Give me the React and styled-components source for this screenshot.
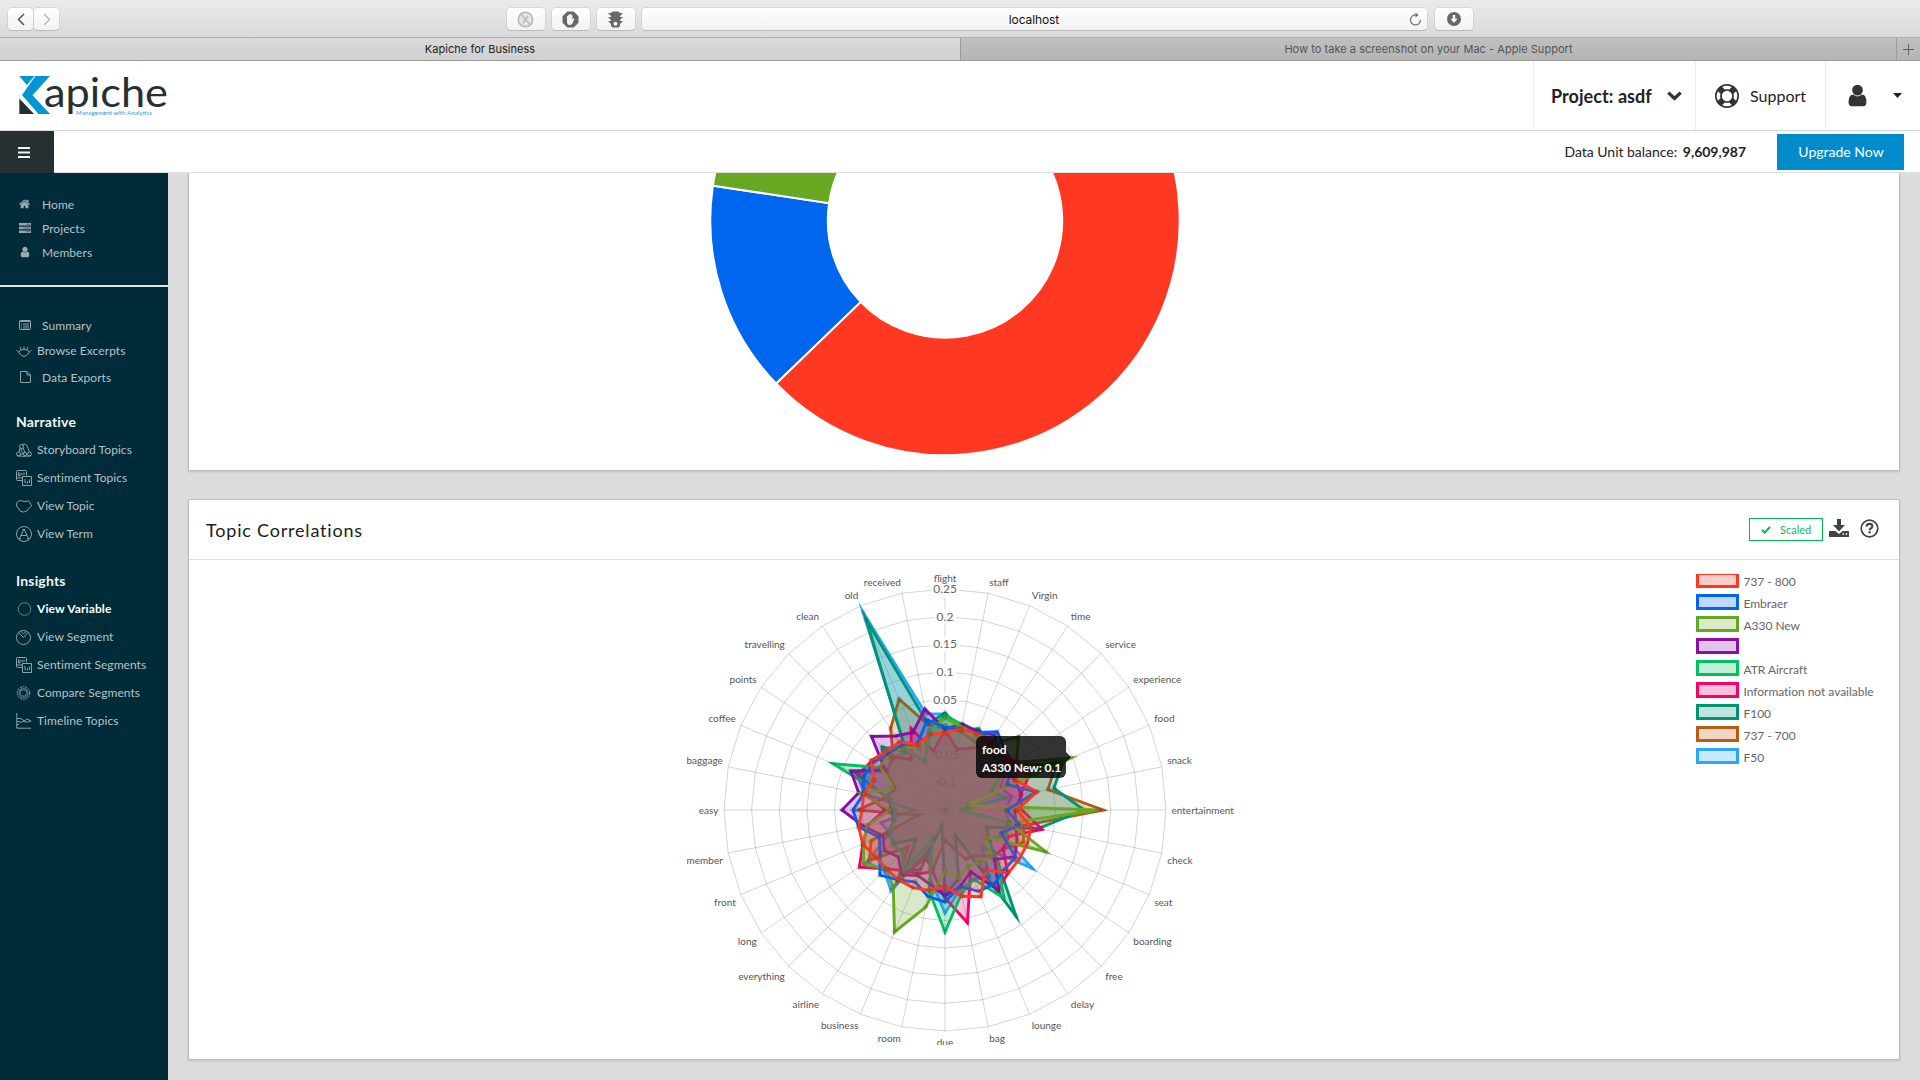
import React from 'react';
import styled, { createGlobalStyle, css } from 'styled-components';

const GlobalStyle = createGlobalStyle`
  *, *::before, *::after { box-sizing: border-box; }
  html, body { margin: 0; padding: 0; }
  body {
    width: 1920px;
    height: 1080px;
    overflow: hidden;
    background: #dcdcdc;
    font-family: Lato, "Open Sans", sans-serif;
    color: #222;
  }
`;

/* ---------- Browser chrome ---------- */

const Page = styled.div`
  display: flex;
  flex-direction: column;
  height: 1080px;
`;

const BrowserBar = styled.div`
  display: flex;
  align-items: flex-start;
  height: 38px;
  flex: none;
  padding: 8px 0 0 8px;
  background: linear-gradient(#ebebeb, #dadada);
  border-bottom: 1px solid #b0b0b0;
  font-family: Inter, Roboto, sans-serif;
`;

const BarButton = styled.div`
  display: flex;
  align-items: center;
  justify-content: center;
  width: ${(p) => p.$w || 38}px;
  height: 22px;
  margin-left: ${(p) => p.$gap || 0}px;
  border-radius: 4px;
  background: linear-gradient(#ffffff, #f2f2f2);
  box-shadow: 0 0 0 0.5px #c4c4c4, 0 1px 0 #b2b2b2;
`;

const AddressBar = styled(BarButton)`
  justify-content: flex-start;
  width: 785px;
  padding-right: 5px;
  color: #111;
  font-size: 12px;
`;

const Address = styled.span`
  flex: 1;
  padding-left: 18px;
  text-align: center;
  letter-spacing: -0.1px;
`;

const TabStrip = styled.div`
  display: flex;
  height: 23px;
  flex: none;
  border-bottom: 1px solid #989898;
  font-family: Inter, Roboto, sans-serif;
  font-size: 11px;
`;

const Tab = styled.div`
  display: flex;
  align-items: center;
  justify-content: center;
  width: ${(p) => p.$w}px;
  letter-spacing: ${(p) => p.$ls || 0}px;
  color: ${(p) => (p.$active ? '#222' : '#545454')};
  background: ${(p) =>
    p.$active ? 'linear-gradient(#dadada, #d1d1d1)' : 'linear-gradient(#c0c0c0, #b5b5b5)'};
  border-left: ${(p) => (p.$active ? 'none' : '1px solid #9a9a9a')};
`;

/* ---------- App header ---------- */

const Header = styled.header`
  display: flex;
  justify-content: space-between;
  height: 70px;
  flex: none;
  padding-left: 18px;
  background: #fff;
  border-bottom: 1px solid #d6d6d6;
`;

const Logo = styled.div`
  padding-top: 3px;
`;

const HeaderNav = styled.nav`
  display: flex;
`;

const HeaderCell = styled.div`
  display: flex;
  align-items: center;
  width: ${(p) => p.$w}px;
  padding: 0 0 0 ${(p) => p.$pad}px;
  gap: ${(p) => p.$gap}px;
  border-left: 1px solid #ececec;
  font-size: ${(p) => p.$size || 16}px;
  font-weight: ${(p) => (p.$bold ? 700 : 400)};
  letter-spacing: ${(p) => p.$ls || 0}px;
  white-space: nowrap;
`;

const SubHeader = styled.div`
  display: flex;
  align-items: center;
  height: 42px;
  flex: none;
  background: linear-gradient(#f6f6f6, #fff 3px);
  border-bottom: 1px solid #e2e2e2;
`;

const MenuToggle = styled.div`
  display: flex;
  align-items: center;
  width: 54px;
  height: 42px;
  margin-bottom: -1px;
  padding-left: 18px;
  background: #263033;
`;

const Balance = styled.div`
  margin-left: auto;
  font-size: 14px;
  letter-spacing: -0.02px;
  b { margin-left: 2px; }
`;

const Upgrade = styled.button`
  width: 127px;
  height: 36px;
  margin: 0 16px 0 31px;
  padding: 0 0 0 1px;
  border: 0;
  background: #008ccb;
  color: #fff;
  font: 400 14px Lato, sans-serif;
`;

/* ---------- Sidebar ---------- */

const Body = styled.div`
  display: flex;
  flex: 1;
  min-height: 0;
`;

const Sidebar = styled.aside`
  width: 168px;
  flex: none;
  padding-top: 19px;
  background: #002b38;
`;

const NavItem = styled.div`
  display: flex;
  align-items: center;
  height: ${(p) => p.$h || 28}px;
  padding-left: 16px;
  font-size: 12px;
  letter-spacing: ${(p) => (p.$active ? 0.12 : 0.06)}px;
  color: ${(p) => (p.$active ? '#fff' : '#b8c3c7')};
  font-weight: ${(p) => (p.$active ? 700 : 400)};
  svg { opacity: 0.85; }
`;

const NavIcon = styled.span`
  display: flex;
  justify-content: ${(p) => (p.$wide ? 'center' : 'flex-start')};
  width: ${(p) => (p.$wide ? 18 : 16)}px;
  margin-right: ${(p) => (p.$wide ? 8 : 5)}px;
  padding-top: ${(p) => (p.$wide ? 0 : 2)}px;
`;

const NavRule = styled.div`
  height: 2px;
  margin: 21px 0 26px;
  background: #dfe4e5;
`;

const NavHeading = styled.div`
  height: 26px;
  line-height: 26px;
  margin-top: ${(p) => p.$top}px;
  padding-left: 16px;
  color: #f2f5f5;
  font-size: 14px;
  font-weight: 700;
  letter-spacing: 0.18px;
`;

/* ---------- Panels ---------- */

const Main = styled.main`
  flex: 1;
  display: flex;
  flex-direction: column;
  gap: 28px;
  padding: 0 20px 0 20px;
  background: #dcdcdc;
`;

const Panel = styled.section`
  background: #fff;
  border: 1px solid #bdbdbd;
  box-shadow: 0 1px 2px rgba(0, 0, 0, 0.12);
`;

const DonutPanel = styled(Panel)`
  height: 298px;
  border-top: 0;
  svg { display: block; }
`;

const RadarPanel = styled(Panel)`
  height: 561px;
`;

const PanelHeader = styled.div`
  display: flex;
  align-items: center;
  height: 60px;
  padding: 0 20px 0 17px;
  border-bottom: 1px solid #dedede;
`;

const PanelTitle = styled.h2`
  flex: 1;
  margin: 0;
  font: 400 18px "Century Gothic", "URW Gothic", Lato, sans-serif;
  letter-spacing: 0.8px;
  color: #1c1c1c;
`;

const ScaledButton = styled.div`
  display: flex;
  align-items: center;
  width: 74px;
  height: 23px;
  margin-right: 6px;
  padding-left: 11px;
  gap: 9px;
  border: 1px solid #00b64f;
  color: #16b85a;
  font-size: 11px;
`;

const PanelTool = styled.span`
  display: flex;
  margin-left: ${(p) => p.$gap || 0}px;
  padding-bottom: 2px;
`;

const ChartArea = styled.div`
  display: flex;
  position: relative;
  padding: 14px 0 0 15px;
`;

const Legend = styled.div`
  display: flex;
  flex-direction: column;
  height: 200px;
  margin-left: 5px;
  overflow: hidden;
`;

const LegendRow = styled.div`
  display: flex;
  height: 22px;
  flex: none;
  gap: 4.500px;
  color: #666;
  font-size: 12px;
  line-height: 18px;
  letter-spacing: -0.03px;
  white-space: nowrap;
  &:first-child { margin-top: -2px; }
`;

const Swatch = styled.span`
  width: 43px;
  height: 16px;
  border: 3px solid ${(p) => p.$c};
  background: ${(p) => p.$c}40;
  background-clip: padding-box;
`;

const LegendText = styled.span`
  padding-top: 1px;
`;

const Tooltip = styled.div`
  position: absolute;
  left: 787px;
  top: 176px;
  width: 90px;
  height: 42px;
  padding: 5px 6px;
  border-radius: 6px;
  background: rgba(0, 0, 0, 0.8);
  color: #fff;
  font-size: 12px;
  font-weight: 700;
  line-height: 18px;
  letter-spacing: -0.06px;
  white-space: nowrap;
  &::after {
    content: '';
    position: absolute;
    left: 100%;
    top: 16px;
    border: 5px solid transparent;
    border-left-color: rgba(0, 0, 0, 0.8);
    border-right-width: 0;
  }
`;

const svgText = css`
  font-family: Lato, sans-serif;
  fill: #666;
`;
const AxisLabel = styled.text`${svgText} font-size: 10px; fill: #555;`;
const TickLabel = styled.text`${svgText} font-size: 12px; text-anchor: middle;`;
const LogoName = styled.text`font-family: "Century Gothic", "URW Gothic", Lato, sans-serif; font-size: 40px; fill: #263033;`;
const LogoTag = styled.text`font-family: Lato, sans-serif; font-size: 6.5px; fill: #2ba0d4;`;

/* ---------- Icons ---------- */

const FA = {
  home: 'M1408 992v480q0 26-19 45t-45 19h-384v-384h-256v384h-384q-26 0-45-19t-19-45v-480q0-1 .5-3t.5-3l575-474 575 474q1 2 1 6zm223-69l-62 74q-8 9-21 11h-3q-13 0-21-7l-692-577-692 577q-12 8-24 7-13-2-21-11l-62-74q-8-10-7-23.5t11-21.5l719-599q32-26 76-26t76 26l244 204v-195q0-14 9-23t23-9h192q14 0 23 9t9 23v408l219 182q10 8 11 21.5t-7 23.5z',
  user: 'M1536 1399q0 109-62.5 187t-150.5 78h-854q-88 0-150.5-78t-62.5-187q0-85 8.5-160.5t31.5-152 58.5-131 94-89 134.5-34.5q131 128 313 128t313-128q76 0 134.5 34.5t94 89 58.5 131 31.5 152 8.5 160.5zm-256-887q0 159-112.5 271.5t-271.5 112.5-271.5-112.5-112.5-271.5 112.5-271.5 271.5-112.5 271.5 112.5 112.5 271.5z',
  ring: 'M896 0q182 0 348 71t286 191 191 286 71 348-71 348-191 286-286 191-348 71-348-71-286-191-191-286-71-348 71-348 191-286 286-191 348-71zm0 128q-190 0-361 90l194 194q82-28 167-28t167 28l194-194q-171-90-361-90zm-678 1129l194-194q-28-82-28-167t28-167l-194-194q-90 171-90 361t90 361zm678 407q190 0 361-90l-194-194q-82 28-167 28t-167-28l-194 194q171 90 361 90zm0-384q159 0 271.5-112.5t112.5-271.5-112.5-271.5-271.5-112.5-271.5 112.5-112.5 271.5 112.5 271.5 271.5 112.5zm484-217l194 194q90-171 90-361t-90-361l-194 194q28 82 28 167t-28 167z',
};

const Glyph = ({ d, size, color = 'currentColor' }) => (
  <svg width={size} height={size} viewBox="0 0 1792 1792" fill={color}>
    <path d={d} />
  </svg>
);

const Line = ({ children, w = 16, h = 16, sw = 0.9 }) => (
  <svg width={w} height={h} viewBox={`0 0 ${w} ${h}`} fill="none" stroke="#b9c6ca" strokeWidth={sw} strokeLinejoin="round">
    {children}
  </svg>
);

const SentimentIcon = () => (
  <Line>
    <path d="M6 10.5H1.5Q.5 10.500 .5 9.500V1.500Q.5.5 1.500.5H9.500Q10.500.5 10.500 1.500V5.500M6.500 6.500H15.500V15.500H6.500Z" />
    <path d="M2.500 2.500V6M2.500 6Q4 7 4 5V2.500M6 3V5.500M8 2.500V5M13.500 9.500V13M11.500 11V13.500M9 9V12Q9 13.500 10 13M.5 8H6" />
  </Line>
);

const ICONS = {
  home: <Glyph d={FA.home} size={12} />,
  user: <Glyph d={FA.user} size={12} />,
  projects: (
    <svg width="12" height="10" viewBox="0 0 12 10" fill="#b3bfc3">
      <path d="M0 0H12V2.600H0ZM0 3.700H12V6.300H0ZM0 7.400H12V10H0Z" />
      <path d="M7.500 1.300H11M4 5H11M6.500 8.700H11" stroke="#4c6770" strokeWidth=".8" />
    </svg>
  ),
  summary: (
    <svg width="12" height="10" viewBox="0 0 12 10" fill="none" stroke="#b3bfc3">
      <rect x=".5" y=".5" width="11" height="9" rx=".8" />
      <path d="M.5 1.500H11.500M2 4H3M4 4H10M2 6H3M4 6H10M2 8H3M4 8H10" strokeWidth=".9" />
    </svg>
  ),
  browse: (
    <Line h={12}>
      <path d="M.5 5 2.500 7Q8 1.500 13.500 7L15.500 5M2.500 7Q8 16 13.500 7M8 4V1.500M4.800 4.600 4 1.800M11.200 4.600 12 1.800" />
    </Line>
  ),
  file: (
    <Line w={11} h={12}>
      <path d="M.5.5H7L10.500 4V11.500H.5ZM7 .5V4H10.500" />
    </Line>
  ),
  story: (
    <Line h={14}>
      <circle cx="5.500" cy="3.500" r="2" />
      <circle cx="2.500" cy="11" r="2" />
      <circle cx="13.500" cy="11" r="2" />
      <circle cx="9" cy="11" r="1.600" />
      <path d="M6 1.500Q10.500 0 11.500 4L13.500 9M4 5 3 9M4.500 11H7.500M10.500 11H11.500M7 5 9 9.500M5.500 5.500Q4 9 7.500 9.500M1 12.800Q8 14 15 12.800" />
    </Line>
  ),
  sentiment: <SentimentIcon />,
  topic: (
    <Line h={13}>
      <path d="M2.500 1Q5 0 7 1.200T11 1Q13 0 14 2.500T15.500 6Q14 7.500 12.500 8.500Q11.500 12 7.500 12Q3.500 12 3 9Q.5 7 .5 5Q.5 2 2.500 1Z" />
    </Line>
  ),
  term: (
    <Line>
      <circle cx="8" cy="8" r="7.500" />
      <path d="M3 13.500 8 3 13 13.500M5 9.500H11M6.500 3.500H9M3 12.800H5M11 12.800H13" />
    </Line>
  ),
  variable: (
    <Line>
      <circle cx="8.500" cy="8" r="6.300" opacity=".7" />
    </Line>
  ),
  segment: (
    <Line>
      <circle cx="7.500" cy="8.500" r="7" />
      <path d="M2.500 3.500 7.500 8.500 12 3.500M5 2.500 7.500 5 10 2.500" />
    </Line>
  ),
  compare: (
    <Line>
      <circle cx="7.500" cy="8" r="6.300" strokeDasharray="2 .8" />
      <circle cx="7.500" cy="8" r="4.600" opacity=".7" />
      <path d="M5 5H10L11 8 9.500 11H5.500L4 8Z" strokeDasharray="1.500 .6" />
    </Line>
  ),
  timeline: (
    <Line>
      <path d="M.8 0V15.200H15M.8 11.500H3M1 5.500H4Q6 5.500 8 8T15 7.500M1 8.500Q6 10.500 9 7.500T15 8.800" />
    </Line>
  ),
};

const NAV = [
  { icon: 'home', label: 'Home', h: 24, wide: true },
  { icon: 'projects', label: 'Projects', h: 24, wide: true },
  { icon: 'user', label: 'Members', h: 24, wide: true },
  { rule: true },
  { icon: 'summary', label: 'Summary', h: 24, wide: true },
  { icon: 'browse', label: 'Browse Excerpts', h: 26 },
  { icon: 'file', label: 'Data Exports', h: 28, wide: true },
  { heading: 'Narrative', top: 18 },
  { icon: 'story', label: 'Storyboard Topics' },
  { icon: 'sentiment', label: 'Sentiment Topics' },
  { icon: 'topic', label: 'View Topic' },
  { icon: 'term', label: 'View Term' },
  { heading: 'Insights', top: 21 },
  { icon: 'variable', label: 'View Variable', active: true },
  { icon: 'segment', label: 'View Segment' },
  { icon: 'sentiment', label: 'Sentiment Segments' },
  { icon: 'compare', label: 'Compare Segments' },
  { icon: 'timeline', label: 'Timeline Topics' },
];

/* ---------- Charts ---------- */

const TOPICS = ['flight', 'staff', 'Virgin', 'time', 'service', 'experience', 'food', 'snack',
  'entertainment', 'check', 'seat', 'boarding', 'free', 'delay', 'lounge', 'bag', 'due', 'room',
  'business', 'airline', 'everything', 'long', 'front', 'member', 'easy', 'baggage', 'coffee',
  'points', 'travelling', 'clean', 'old', 'received'];

/* Distance of every vertex from the chart centre, one entry per topic. */
const SERIES = [
  { name: '737 - 800', color: '#ff3822', r: [77, 82.5, 83, 82, 82, 85, 77, 94, 72, 88, 89, 89, 89.5, 72, 94, 88, 77, 82, 84, 84, 83, 84, 89, 88, 83, 83, 77, 89, 83, 82, 71, 77] },
  { name: 'Embraer', color: '#0064ee', fill: 0.14, r: [83, 82, 84, 94, 85, 82, 67, 93, 62, 76, 61, 85, 84, 89, 88, 78, 92, 88, 78, 84, 92, 78, 71, 88, 92, 83, 88, 86, 80, 78, 71.5, 92] },
  { name: 'A330 New', color: '#66a822', r: [92, 85, 80, 78, 104, 86, 136, 23, 153, 66, 109, 49, 66, 63, 61, 70, 61, 99, 132, 93, 83, 98, 88, 80, 55, 86, 56, 78, 78, 76, 66, 80] },
  { name: '', color: '#8a0fa8', r: [81, 88, 85, 90, 78, 74, 76, 78, 70, 72, 78, 84, 70, 97, 67, 78, 86, 76, 71, 78, 66, 73, 67, 83, 103, 88, 102, 72, 104, 89, 84, 103] },
  { name: 'ATR Aircraft', color: '#00bf5f', r: [95, 87, 84, 80, 78, 72, 50, 62, 17, 66, 66, 53, 75, 106, 75, 85, 122, 82, 31, 75, 60, 63, 60, 52, 50, 56, 121, 76, 87, 77, 52, 80] },
  { name: 'Information not available', color: '#f90066', r: [80, 62, 67, 75, 80, 80, 91, 77, 77, 99, 69, 70, 89, 96, 67, 115, 88, 63, 69, 73, 83, 103, 89, 79, 60, 80, 94, 88, 75, 61, 88, 60] },
  { name: 'F100', color: '#009473', r: [97, 82, 88, 80, 72, 70, 128, 111, 139, 95, 45, 53, 75, 128, 28, 70, 85, 16, 65, 72, 41, 60, 62, 52, 54, 57, 98, 75, 89, 70, 206, 88] },
  { name: '737 - 700', color: '#b85c12', r: [82, 80, 75, 70, 80, 82, 120, 105, 158, 80, 85, 70, 66, 55, 53, 38, 30, 60, 52, 87, 52, 91, 80, 27, 87, 62, 54, 70, 73, 98, 120, 87] },
  { name: 'F50', color: '#2ba6ff', r: [96, 84, 86, 85, 80, 75, 60, 68, 60, 66, 60, 105, 52, 80, 75, 80, 103, 72, 43, 97, 86, 94, 60, 65, 32, 82, 96, 70, 75, 68, 214, 98] },
];

const CX = 741;
const CY = 236;
const R = 221;
const polar = (k, r) => {
  const a = (k * 2 * Math.PI) / TOPICS.length;
  return [CX + r * Math.sin(a), CY - r * Math.cos(a)];
};
const polygon = (radii) => radii.map((r, k) => polar(k, r).map((n) => n.toFixed(1)).join(',')).join(' ');
const TICKS = ['-0.1', '-0.05', '0', '0.05', '0.1', '0.15', '0.2', '0.25'];

function Radar() {
  return (
    <svg width="1487" height="471" viewBox="0 0 1487 471">
      <g fill="none" stroke="#000" strokeOpacity=".17">
        {TICKS.map((t, i) => (
          <polygon key={t} points={polygon(TOPICS.map(() => (R / 8) * (i + 1)))} />
        ))}
        {TOPICS.map((t, k) => {
          const [x, y] = polar(k, R);
          return <line key={t} x1={CX} y1={CY} x2={x} y2={y} />;
        })}
      </g>
      {TICKS.map((t, i) => {
        const y = CY - (R / 8) * (i + 1);
        const w = t.length * 6 + 5;
        return (
          <g key={t}>
            <rect x={CX - w / 2} y={y - 8} width={w} height="16" fill="#fff" fillOpacity=".75" />
            <TickLabel x={CX} y={y + 4}>{t}</TickLabel>
          </g>
        );
      })}
      {TOPICS.map((t, k) => {
        const [x, y] = polar(k, R + 5.5);
        const n = TOPICS.length;
        const middle = k === 0 || k === n / 2;
        const side = k === n / 4 || k === (3 * n) / 4;
        const upper = k < n / 4 || k > (3 * n) / 4;
        const top = side ? y - 5 : upper ? y - 10.500 : y + 0.5;
        return (
          <AxisLabel key={t} x={x} y={top + 9} textAnchor={middle ? 'middle' : k < n / 2 ? 'start' : 'end'}>
            {t}
          </AxisLabel>
        );
      })}
      {[...SERIES].reverse().map((s) => (
        <g key={s.color}>
          <polygon points={polygon(s.r)} fill={s.color} fillOpacity={s.fill || 0.25} stroke={s.color} strokeWidth="2.900" strokeMiterlimit="10" />
          {s.r.map((r, k) => {
            const [x, y] = polar(k, r);
            return <circle key={k} cx={x} cy={y} r="3" fill="#000" fillOpacity=".1" />;
          })}
        </g>
      ))}
    </svg>
  );
}

const DX = 756;
const DY = 47.500;
const ring = (a0, a1) => {
  const p = (r, a) => `${DX + r * Math.sin(a)} ${DY - r * Math.cos(a)}`;
  const big = a1 - a0 > Math.PI ? 1 : 0;
  return `M${p(234.7, a0)}A234.700 234.700 0 ${big} 1 ${p(234.7, a1)}L${p(117.2, a1)}A117.200 117.200 0 ${big} 0 ${p(117.2, a0)}Z`;
};

function Donut() {
  const split = Math.PI + 0.8035;
  const second = Math.PI * 1.5 + 0.1487;
  return (
    <svg width="1700" height="297" viewBox="0 0 1700 297" stroke="#fff" strokeWidth="2">
      <path d={ring(0, split)} fill="#ff3822" />
      <path d={ring(split, second)} fill="#0066ee" />
      <path d={ring(second, second + 0.7)} fill="#66a822" />
    </svg>
  );
}

export default function App() {
  return (
    <Page>
      <GlobalStyle />
      <BrowserBar>
        <BarButton $w={25}>
          <svg width="8" height="13" fill="none" stroke="#555" strokeWidth="1.500"><path d="M7 1 1.500 6.500 7 12" /></svg>
        </BarButton>
        <BarButton $w={25} $gap={1}>
          <svg width="8" height="13" fill="none" stroke="#bbb" strokeWidth="1.500"><path d="M1 1 6.500 6.500 1 12" /></svg>
        </BarButton>
        <BarButton $gap={447.5}>
          <svg width="17" height="17" fill="#e4e4e4" stroke="#b9b9b9" strokeWidth="1.600">
            <circle cx="8.500" cy="8.500" r="7.200" />
            <path d="M4 3.500 13 13.500M11 5 6 12" strokeWidth="1.300" />
          </svg>
        </BarButton>
        <BarButton $gap={7}>
          <svg width="17" height="17">
            <path d="M5.300.5H11.700L16.500 5.300V11.700L11.700 16.500H5.300L.5 11.700V5.300Z" fill="#686868" />
            <path d="M5 9V5.200Q5.600 4.300 6.200 5.200V4Q6.900 3 7.600 4V3.200Q8.300 2.400 9 3.200V4Q9.800 3.200 10.400 4.200V8.500L11.600 7.300Q12.700 7 12.300 8.300L10.500 12.300Q10 14 8 14Q5 14 5 11Z" fill="#f4f4f4" />
          </svg>
        </BarButton>
        <BarButton $gap={7}>
          <svg width="17" height="17" fill="#686868">
            <path d="M5.500.5H11.500L13 2H16L13 5V6H16L13 9V10H16L13 13V15L11.500 16.500H5.500L4 15V13L1 10H4V9L1 6H4V5L1 2H4Z" />
            <circle cx="8.500" cy="12.800" r="2" fill="#f4f4f4" />
          </svg>
        </BarButton>
        <AddressBar $gap={7}>
          <Address>localhost</Address>
          <svg width="13" height="14" fill="none" stroke="#6d6d6d" strokeWidth="1.200">
            <path d="M7 3A5 5 0 1 0 11.500 8" />
            <path d="M6.500.5 9.500 3 6.500 5.500Z" fill="#6d6d6d" stroke="none" />
          </svg>
        </AddressBar>
        <BarButton $gap={8}>
          <svg width="14" height="14">
            <circle cx="7" cy="7" r="7" fill="#686868" />
            <path d="M5.800 3H8.200V6.800H10.500L7 11 3.500 6.800H5.800Z" fill="#fff" />
          </svg>
        </BarButton>
      </BrowserBar>
      <TabStrip>
        <Tab $active $w={960} $ls={0.04}>Kapiche for Business</Tab>
        <Tab $w={936} $ls={0.04}>How to take a screenshot on your Mac - Apple Support</Tab>
        <Tab $w={24}>
          <svg width="11" height="11" stroke="#606060"><path d="M5.500 0V11M0 5.500H11" /></svg>
        </Tab>
      </TabStrip>

      <Header>
        <Logo>
          <svg width="156" height="60" viewBox="0 -10 156 60">
            <path d="M1.300 2H16.500L8.900 11Z" fill="#0095d3" />
            <path d="M17.500 2H32L14.500 21.300 32 40H20.500L4 21Z" fill="#0095d3" />
            <path d="M1.300 24.500V40H16Z" fill="#263033" />
            <LogoName x="26" y="33" textLength="124" lengthAdjust="spacingAndGlyphs">apiche</LogoName>
            <LogoTag x="58" y="40.500" textLength="76" lengthAdjust="spacingAndGlyphs">Management with Analytics</LogoTag>
          </svg>
        </Logo>
        <HeaderNav>
          <HeaderCell $w={162} $pad={17} $gap={15} $size={18} $bold $ls={0.06}>
            Project: asdf
            <svg width="15" height="10" fill="none" stroke="#333" strokeWidth="3.200"><path d="M1.300 1.600 7.500 7.500 13.700 1.600" /></svg>
          </HeaderCell>
          <HeaderCell $w={130} $pad={19} $gap={11}>
            <Glyph d={FA.ring} size={24} color="#333" />
            Support
          </HeaderCell>
          <HeaderCell $w={95} $pad={18.5} $gap={23.5}>
            <Glyph d={FA.user} size={25} color="#333" />
            <svg width="9" height="5" fill="#222"><path d="M0 0H9L4.500 5Z" /></svg>
          </HeaderCell>
        </HeaderNav>
      </Header>

      <SubHeader>
        <MenuToggle>
          <svg width="12" height="11" fill="#f2f2f2"><path d="M0 0H12V2H0ZM0 4.500H12V6.500H0ZM0 9H12V11H0Z" /></svg>
        </MenuToggle>
        <Balance>Data Unit balance: <b>9,609,987</b></Balance>
        <Upgrade>Upgrade Now</Upgrade>
      </SubHeader>

      <Body>
        <Sidebar>
          {NAV.map((n, i) => {
            if (n.rule) return <NavRule key={i} />;
            if (n.heading) return <NavHeading key={i} $top={n.top}>{n.heading}</NavHeading>;
            return (
              <NavItem key={i} $h={n.h} $active={n.active}>
                <NavIcon $wide={n.wide}>{ICONS[n.icon]}</NavIcon>
                {n.label}
              </NavItem>
            );
          })}
        </Sidebar>
        <Main>
          <DonutPanel><Donut /></DonutPanel>
          <RadarPanel>
            <PanelHeader>
              <PanelTitle>Topic Correlations</PanelTitle>
              <ScaledButton>
                <svg width="10" height="8" fill="none" stroke="#16b85a" strokeWidth="2.200"><path d="M1 4 3.700 6.500 9 1" /></svg>
                Scaled
              </ScaledButton>
              <PanelTool>
                <svg width="20" height="19" viewBox="0 0 20 19" fill="#444">
                  <path d="M8 0H12V6H16L10 12.500 4 6H8ZM0 12.500Q0 12 .8 12H6.500L10 15 13.500 12H19.200Q20 12 20 12.500V17.500Q20 18 19.200 18H.8Q0 18 0 17.500Z" />
                  <path d="M13.500 15H15M16.700 15H18.200" stroke="#fff" strokeWidth="1.300" />
                </svg>
              </PanelTool>
              <PanelTool $gap={11}>
                <svg width="19" height="19" viewBox="0 0 19 19" fill="none" stroke="#444">
                  <circle cx="9.500" cy="9.500" r="8.300" strokeWidth="1.700" />
                  <path d="M6.500 7.500Q6.700 4.900 9.500 4.900T12.400 7.300Q12.400 8.500 11 9.200T9.600 11.300" strokeWidth="2.100" />
                  <path d="M8.500 13.300H10.700" strokeWidth="2.100" />
                </svg>
              </PanelTool>
            </PanelHeader>
            <ChartArea>
              <Radar />
              <Legend>
                {SERIES.map((s) => (
                  <LegendRow key={s.color}>
                    <Swatch $c={s.color} />
                    <LegendText>{s.name}</LegendText>
                  </LegendRow>
                ))}
              </Legend>
              <Tooltip>
                <div>food</div>
                <div>A330 New: 0.1</div>
              </Tooltip>
            </ChartArea>
          </RadarPanel>
        </Main>
      </Body>
    </Page>
  );
}
